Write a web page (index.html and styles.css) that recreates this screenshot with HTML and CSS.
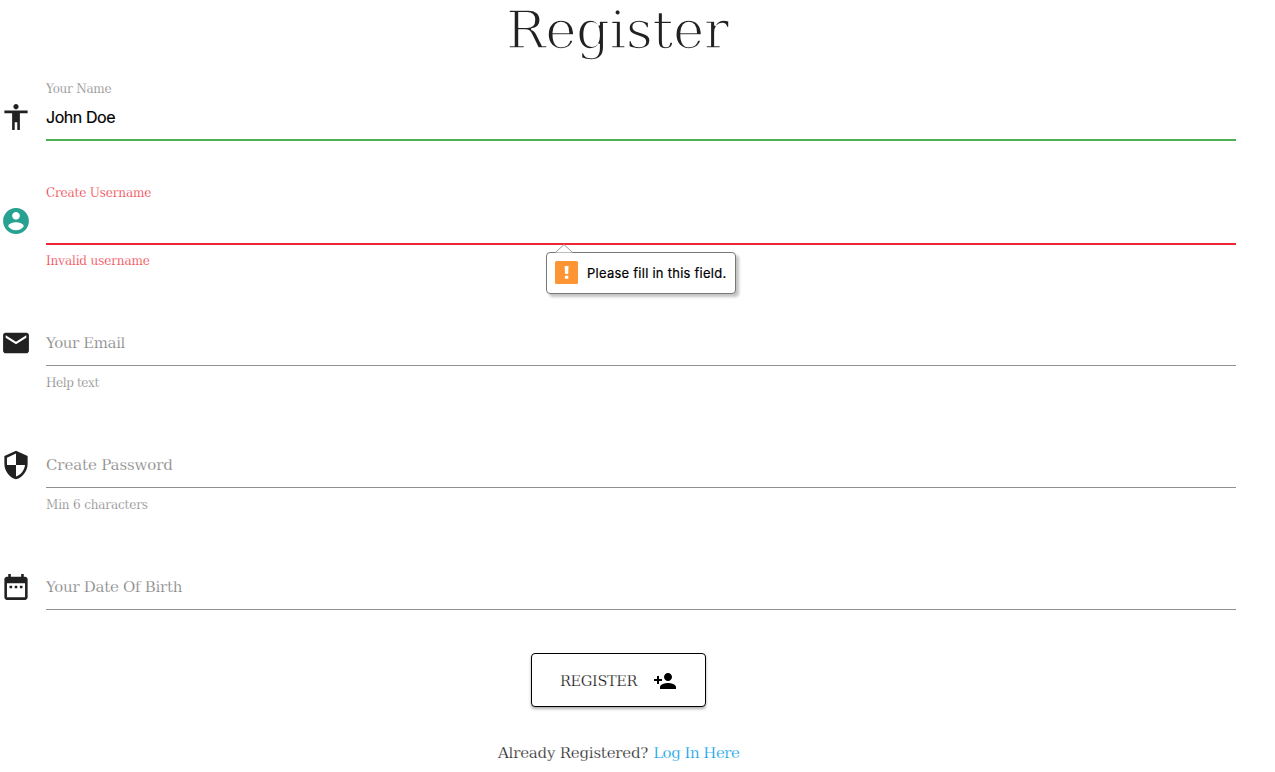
FILE: index.html
```html
<!DOCTYPE html>
<html lang="en">
<head>
<meta charset="utf-8">
<title>Register</title>
<link rel="stylesheet" href="styles.css">
</head>
<body>
<main class="page">
  <h1 class="title"><span class="title-text">Register</span></h1>
  <form class="form">
    <div class="field field-valid">
      <label class="label"><span class="t-name">Your Name</span></label>
      <svg class="icon" viewBox="0 0 24 24"><path d="M12 2c1.100 0 2 .900 2 2s-.900 2-2 2-2-.900-2-2 .900-2 2-2zm9 7h-6v13h-2v-6h-2v6H9V9H3V7h18v2z"/></svg>
      <div class="control"><span class="value">John Doe</span></div>
    </div>
    <div class="field field-invalid">
      <label class="label"><span class="t-user">Create Username</span></label>
      <svg class="icon" viewBox="0 0 24 24"><path d="M12 2C6.480 2 2 6.480 2 12s4.480 10 10 10 10-4.480 10-10S17.520 2 12 2zm0 3c1.660 0 3 1.340 3 3s-1.340 3-3 3-3-1.340-3-3 1.340-3 3-3zm0 14.200c-2.500 0-4.710-1.280-6-3.220.030-1.990 4-3.080 6-3.080 1.990 0 5.970 1.090 6 3.080-1.290 1.940-3.500 3.220-6 3.220z"/></svg>
      <div class="control"></div>
      <div class="helper"><span class="t-invalid">Invalid username</span></div>
      <div class="bubble" role="alert">
        <svg class="bubble-tip" viewBox="0 0 18 9"><path d="M.5 8.500 9 .5l8.500 8"/></svg>
        <svg class="bubble-icon" viewBox="0 0 23 23"><rect width="23" height="23" rx="1.500" fill="#fd9535"/><path d="M9.700 5h3.800l-.3 8H10zM9.900 14.700h3.400v3H9.900z" fill="#fff"/></svg>
        <span class="bubble-text">Please fill in this field.</span>
      </div>
    </div>
    <div class="field">
      <svg class="icon" viewBox="0 0 24 24"><path d="M20 4H4c-1.100 0-1.990.900-1.990 2L2 18c0 1.100.900 2 2 2h16c1.100 0 2-.900 2-2V6c0-1.100-.900-2-2-2zm0 4l-8 5-8-5V6l8 5 8-5v2z"/></svg>
      <div class="control"><span class="placeholder t-email">Your Email</span></div>
      <div class="helper"><span class="t-help">Help text</span></div>
    </div>
    <div class="field">
      <svg class="icon" viewBox="0 0 24 24"><path d="M12 1L3 5v6c0 5.550 3.840 10.740 9 12 5.160-1.260 9-6.450 9-12V5l-9-4zm0 10.990h7c-.530 4.120-3.280 7.790-7 8.940V12H5V6.300l7-3.110v8.800z"/></svg>
      <div class="control"><span class="placeholder t-pass">Create Password</span></div>
      <div class="helper"><span class="t-min">Min 6 characters</span></div>
    </div>
    <div class="field field-last">
      <svg class="icon" viewBox="0 0 24 24"><path d="M9 11H7v2h2v-2zm4 0h-2v2h2v-2zm4 0h-2v2h2v-2zm2-7h-1V2h-2v2H8V2H6v2H5c-1.110 0-1.990.900-1.990 2L3 20c0 1.100.890 2 2 2h14c1.100 0 2-.900 2-2V6c0-1.100-.900-2-2-2zm0 16H5V9h14v11z"/></svg>
      <div class="control"><span class="placeholder t-birth">Your Date Of Birth</span></div>
    </div>
    <button class="submit" type="button">
      <span class="t-submit">REGISTER</span>
      <svg class="submit-icon" viewBox="0 0 24 24"><path d="M15 12c2.210 0 4-1.790 4-4s-1.790-4-4-4-4 1.790-4 4 1.790 4 4 4zm-9-2V7H4v3H1v2h3v3h2v-3h3v-2H6zm9 4c-2.670 0-8 1.340-8 4v2h16v-2c0-2.660-5.330-4-8-4z"/></svg>
    </button>
  </form>
  <p class="login"><span class="t-already">Already Registered?</span><a class="login-link t-login">Log In Here</a></p>
</main>
</body>
</html>
```

FILE: styles.css
```css
* { box-sizing: border-box; }
body {
  margin: 0;
  background: #fff;
  color: #212121;
  font-family: "DejaVu Serif", serif;
  overflow: hidden;
}
.page { width: 1236px; }
.title {
  margin: 0;
  height: 82px;
  padding-left: 506px;
  font-size: 53px;
  font-weight: 400;
  line-height: 59px;
  white-space: nowrap;
}
.title-text {
  letter-spacing: -0.6px;
  -webkit-text-stroke: 1.7px #fff;
}
.form { display: flex; flex-direction: column; }
.field {
  position: relative;
  display: grid;
  grid-template-columns: 46px 1fr;
  grid-template-rows: 14px 44px 25px;
  height: 122px;
  color: #7c7c7c;
}
.field-valid { height: 104px; }
.field-last { height: 101px; }
.label {
  grid-area: 1 / 2;
  font-size: 12px;
  line-height: 14px;
}
.icon {
  grid-area: 2 / 1;
  width: 32px;
  height: 32px;
  margin-top: 5px;
  padding: 0.5px;
  fill: #212121;
}
.control {
  grid-area: 2 / 2;
  border-bottom: 1px solid #919191;
  line-height: 42px;
}
.placeholder { font-size: 15px; }
.value {
  color: #000;
  font-family: Inter, "Liberation Sans", sans-serif;
  font-size: 16px;
  letter-spacing: -0.45px;
  -webkit-text-stroke: 0.2px #000;
}
.helper {
  grid-area: 3 / 2;
  padding-top: 9px;
  font-size: 12px;
  line-height: 16px;
}
.label span, .helper span, .placeholder, .login span, .login a, .submit span {
  white-space: nowrap;
  -webkit-text-stroke: 0.25px #fff;
}
.field-valid .control { border-color: #4caf50; box-shadow: 0 1px #4caf50; }
.field-invalid { color: #ee2630; }
.field-invalid .icon { fill: #26a192; }
.field-invalid .control { border-color: #ee2737; box-shadow: 0 1px #ee2737; }
.bubble {
  position: absolute;
  left: 546px;
  top: 66px;
  width: 190px;
  height: 42px;
  display: flex;
  align-items: center;
  gap: 9px;
  padding-left: 8px;
  border: 1px solid #777;
  border-radius: 4px;
  background: #fff;
  box-shadow: 3px 3px 3px rgba(0, 0, 0, .24);
}
.bubble-tip {
  position: absolute;
  left: 8px;
  top: -9px;
  width: 18px;
  height: 9px;
  fill: #fff;
  stroke: #999;
}
.bubble-icon { width: 23px; height: 23px; margin-top: -2px; }
.bubble-text {
  color: #000;
  font: 13px Inter, "Liberation Sans", sans-serif;
  letter-spacing: 0.25px;
  -webkit-text-stroke: 0.2px #000;
  white-space: nowrap;
}
.submit {
  display: flex;
  align-items: center;
  width: 175px;
  height: 54px;
  margin-left: 531px;
  padding: 2px 0 0 28px;
  gap: 16px;
  border: 1px solid #000;
  border-radius: 4px;
  background: #fff;
  box-shadow: 0 2px 3px rgba(0, 0, 0, .32);
  color: #111;
  font: 14.500px "DejaVu Serif", serif;
}
.submit-icon { width: 24px; height: 24px; fill: #000; }
.login {
  display: flex;
  gap: 5px;
  margin: 34px 0 0 498px;
  font-size: 15px;
  line-height: 24px;
}
.login-link { color: #039be5; }
.t-name { letter-spacing: -0.25px; }
.t-user { letter-spacing: -0.15px; }
.t-invalid { letter-spacing: -0.12px; }
.t-email { letter-spacing: -0.4px; }
.t-help { letter-spacing: -0.4px; }
.t-pass { letter-spacing: -0.12px; }
.t-min { letter-spacing: -0.15px; }
.t-birth { letter-spacing: -0.28px; }
.t-submit { letter-spacing: -0.35px; }
.t-already { letter-spacing: -0.22px; }
.t-login { letter-spacing: -0.5px; }
```
